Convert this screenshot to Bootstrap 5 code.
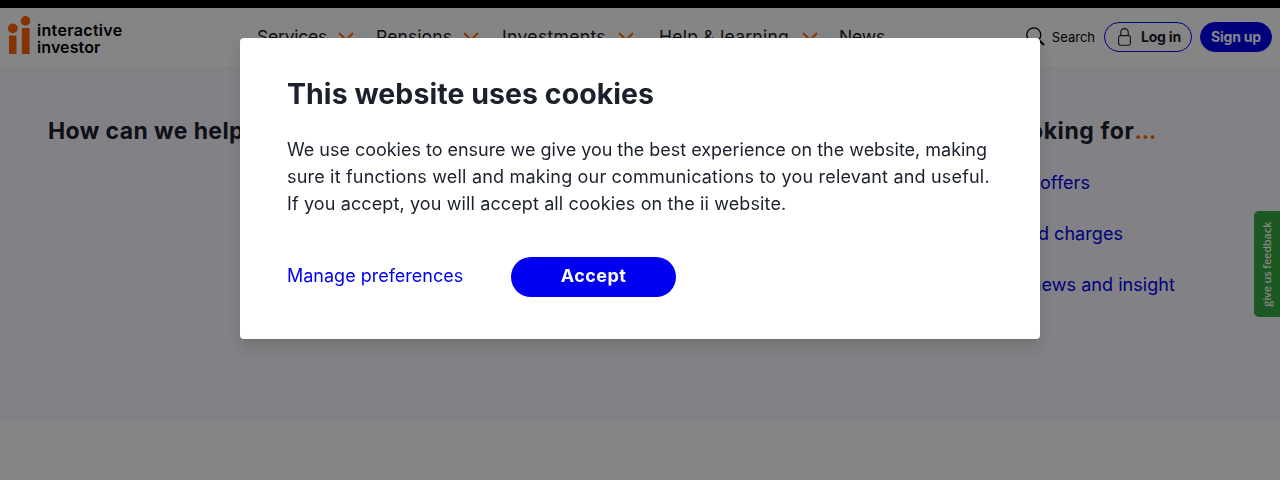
<!DOCTYPE html>
<html lang="en">
<head>
<meta charset="utf-8">
<meta name="viewport" content="width=device-width, initial-scale=1">
<title>interactive investor</title>
<link href="https://cdn.jsdelivr.net/npm/bootstrap@5.3.0/dist/css/bootstrap.min.css" rel="stylesheet">
<style>
:root{--ink:#1b202c;--blue:#0000f0;--orange:#ff6200}
body{font-family:Inter,sans-serif;font-size:18px;line-height:27px;color:var(--ink);background:#fff;height:480px;overflow:hidden;letter-spacing:.05px}
a{color:var(--blue);text-decoration:none}
svg{display:block;flex:none}
.topline{height:8px;background:#000}
.site-header{height:60px;padding:0 8px 2px;border-bottom:1px solid #f4f4f6}
.brand{width:249px;height:38px;margin-top:-4px}
.brand-name{font-size:16px;font-weight:600;line-height:17px;color:#000;margin:6px 0 0 7px}
.menu-item{font-size:17.5px;line-height:24px;white-space:nowrap;color:var(--ink)}
.actions{font-size:14px;line-height:20px}
.pill{height:30px;border-radius:15px;font-weight:700;border:1px solid var(--blue);white-space:nowrap}
.help{height:354px;background:#faf8ff;padding:47px 48px 0}
.help h2{font-size:23px;line-height:32px;font-weight:700;margin:0;letter-spacing:.4px}
.quick li{margin-bottom:24px;white-space:nowrap}
.feedback{top:211px;right:0;width:26px;height:106px;background:#37a940;border-radius:5px 0 0 5px;color:#fff}
.feedback span{writing-mode:vertical-rl;transform:rotate(180deg);font:600 11px/14px "Open Sans",sans-serif;letter-spacing:-.2px;white-space:nowrap}
.shade{background:rgba(0,0,0,.48);z-index:1040}
.consent{width:800px;height:301px;margin:38px auto 0;padding:36px 47px 0;background:#fff;border-radius:4px;box-shadow:0 8px 16px rgba(0,0,0,.15)}
.consent h1{font-size:28.5px;line-height:40px;font-weight:700;letter-spacing:.05px;margin:0 0 22px}
.consent p{margin:0 0 40px;white-space:nowrap}
.accept{width:165px;height:40px;border-radius:20px;background:var(--blue);color:#fff;font-size:18px;font-weight:700;letter-spacing:.45px}
.accept:hover{background:var(--blue);color:#fff}
</style>
</head>
<body>
<div class="topline"></div>
<header class="site-header d-flex align-items-center">
  <a class="brand d-flex" href="#">
    <svg width="22" height="38" viewBox="0 0 22 38" fill="#ff6200"><circle cx="4.8" cy="12.4" r="4.9"/><path d="M1 19.5h7.5V38H1zM13.8 11.9h7.8V38h-7.8z"/><circle cx="17.5" cy="4.8" r="4.8"/></svg>
    <span class="brand-name"><span style="letter-spacing:.32px">interactive</span><br><span style="letter-spacing:.1px">investor</span></span>
  </a>
  <nav class="d-flex align-items-center">
    <a class="menu-item" href="#" style="width:81px;letter-spacing:-.22px">Services</a>
    <svg width="16" height="10" viewBox="0 0 16 10" fill="none" stroke="#ff6200" stroke-width="1.8"><path d="M1 1l7 7 7-7"/></svg>
    <a class="menu-item" href="#" style="width:87px;margin-left:22px;letter-spacing:.1px">Pensions</a>
    <svg width="16" height="10" viewBox="0 0 16 10" fill="none" stroke="#ff6200" stroke-width="1.8"><path d="M1 1l7 7 7-7"/></svg>
    <a class="menu-item" href="#" style="width:116px;margin-left:23px;letter-spacing:.35px">Investments</a>
    <svg width="16" height="10" viewBox="0 0 16 10" fill="none" stroke="#ff6200" stroke-width="1.8"><path d="M1 1l7 7 7-7"/></svg>
    <a class="menu-item" href="#" style="width:143px;margin-left:25px;letter-spacing:.25px">Help &amp; learning</a>
    <svg width="16" height="10" viewBox="0 0 16 10" fill="none" stroke="#ff6200" stroke-width="1.8"><path d="M1 1l7 7 7-7"/></svg>
    <a class="menu-item" href="#" style="margin-left:21px;letter-spacing:-.15px">News</a>
  </nav>
  <div class="actions ms-auto d-flex align-items-center">
    <svg width="19" height="19" viewBox="0 0 19 19" fill="none" stroke="#000"><circle cx="7.8" cy="7.8" r="7" stroke-width="1.3"/><path d="M13 13l5 5" stroke-width="2.2"/></svg>
    <a href="#" class="text-black" style="font-size:13px;margin:0 9px 0 7px;letter-spacing:0">Search</a>
    <a href="#" class="pill d-flex align-items-center" style="width:88px;padding-left:13px;color:var(--ink);letter-spacing:-.2px">
      <svg width="13" height="18" viewBox="0 0 13 18" fill="none" stroke="#1b202c" stroke-width="1.1"><rect x=".6" y="7.6" width="11.8" height="9.6" rx="1.6"/><path d="M2.8 7.6V4.3a3.7 3.7 0 0 1 7.4 0v3.3"/></svg>
      <span style="margin-left:10px">Log in</span></a>
    <a href="#" class="pill d-flex align-items-center justify-content-center text-white ms-2" style="width:72px;background:var(--blue);letter-spacing:-.2px">Sign up</a>
  </div>
</header>
<main class="help d-flex justify-content-between">
  <h2>How can we help you?</h2>
  <section style="width:273px">
    <h2 style="letter-spacing:.6px;margin-bottom:22px;white-space:nowrap"><span class="d-flex justify-content-end" style="width:197px">Looking for<span style="color:var(--orange);letter-spacing:-.5px">...</span></span></h2>
    <ul class="quick list-unstyled d-flex flex-column align-items-start m-0">
      <li class="text-end" style="width:131px"><a href="#">Special offers</a></li>
      <li class="text-end" style="width:164px"><a href="#">Rates and charges</a></li>
      <li class="text-end" style="width:216px"><a href="#">Latest news and insight</a></li>
    </ul>
  </section>
</main>
<div class="feedback position-fixed d-flex align-items-center justify-content-center"><span>give us feedback</span></div>
<div class="shade position-fixed top-0 start-0 w-100 h-100">
  <div class="consent" role="dialog" aria-modal="true">
    <h1>This website uses cookies</h1>
    <p><span style="letter-spacing:-.02px">We use cookies to ensure we give you the best experience on the website, making</span><br><span style="letter-spacing:.185px">sure it functions well and making our communications to you relevant and useful.</span><br><span style="letter-spacing:.12px">If you accept, you will accept all cookies on the ii website.</span></p>
    <div class="d-flex align-items-center">
      <a href="#" class="pb-1" style="width:224px;letter-spacing:0">Manage preferences</a>
      <button class="accept btn border-0 p-0 pb-1">Accept</button>
    </div>
  </div>
</div>
</body>
</html>
